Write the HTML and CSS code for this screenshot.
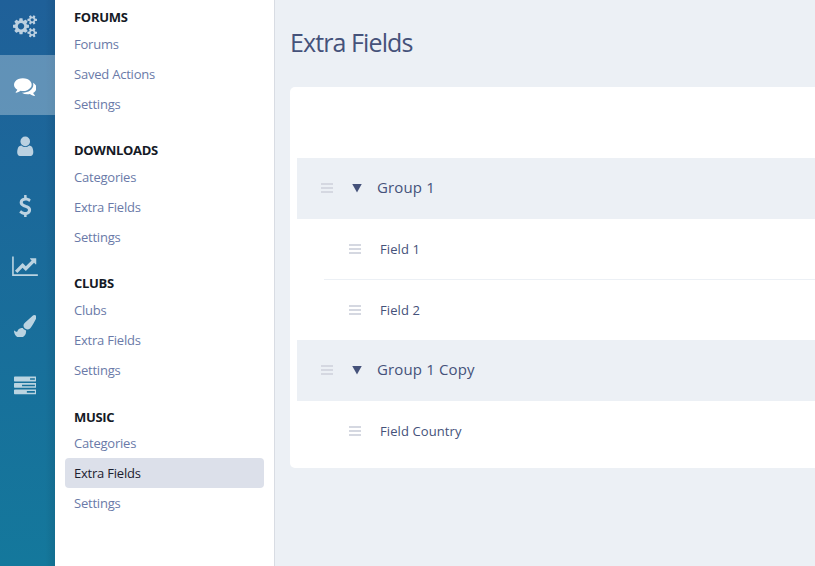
FILE: index.html
```
<!DOCTYPE html>
<html lang="en">
<head>
  <meta charset="UTF-8" />
  <meta name="viewport" content="width=device-width, initial-scale=1" />
  <title>Extra Fields</title>
  <link rel="stylesheet" href="styles.css">
</head>
<body>
  <nav class="rail">
    <a class="rail-item first"><svg class="icon cogs" viewBox="0 0 1920 1792"><path d="M896 896q0-106-75-181t-181-75-181 75-75 181 75 181 181 75 181-75 75-181zm768 512q0-52-38-90t-90-38-90 38-38 90q0 53 37.500 90.500t90.500 37.500 90.500-37.500 37.500-90.500zm0-1024q0-52-38-90t-90-38-90 38-38 90q0 53 37.500 90.500t90.500 37.500 90.500-37.500 37.500-90.500zm-384 421v185q0 10-7 19.500t-16 10.500l-155 24q-11 35-32 76 34 48 90 115 7 11 7 20 0 12-7 19-23 30-82.500 89.500t-78.500 59.500q-11 0-21-7l-115-90q-37 19-77 31-11 108-23 155-7 24-30 24h-186q-11 0-20-7.500t-10-17.500l-23-153q-34-10-75-31l-118 89q-7 7-20 7-11 0-21-8-144-133-144-160 0-9 7-19 10-14 41-53t47-61q-23-44-35-82l-152-24q-10-1-17-9.500t-7-19.500v-185q0-10 7-19.500t16-10.500l155-24q11-35 32-76-34-48-90-115-7-11-7-20 0-12 7-20 22-30 82-89t79-59q11 0 21 7l115 90q34-18 77-32 11-108 23-154 7-24 30-24h186q11 0 20 7.500t10 17.500l23 153q34 10 75 31l118-89q8-7 20-7 11 0 21 8 144 133 144 160 0 8-7 19-12 16-42 54t-45 60q23 48 34 82l152 23q10 2 17 10.500t7 19.500zm640 533v140q0 16-149 31-12 27-30 52 51 113 51 138 0 4-4 7-122 71-124 71-8 0-46-47t-52-68q-20 2-30 2t-30-2q-14 21-52 68t-46 47q-2 0-124-71-4-3-4-7 0-25 51-138-18-25-30-52-149-15-149-31v-140q0-16 149-31 13-29 30-52-51-113-51-138 0-4 4-7 4-2 35-20t59-34 30-16q8 0 46 46.500t52 67.500q20-2 30-2t30 2q51-71 92-112l6-2q4 0 124 70 4 3 4 7 0 25-51 138 17 23 30 52 149 15 149 31zm0-1024v140q0 16-149 31-12 27-30 52 51 113 51 138 0 4-4 7-122 71-124 71-8 0-46-47t-52-68q-20 2-30 2t-30-2q-14 21-52 68t-46 47q-2 0-124-71-4-3-4-7 0-25 51-138-18-25-30-52-149-15-149-31v-140q0-16 149-31 13-29 30-52-51-113-51-138 0-4 4-7 4-2 35-20t59-34 30-16q8 0 46 46.500t52 67.500q20-2 30-2t30 2q51-71 92-112l6-2q4 0 124 70 4 3 4 7 0 25-51 138 17 23 30 52 149 15 149 31z"/></svg></a>
    <a class="rail-item active"><svg class="icon" viewBox="0 0 1792 1792"><path d="M1408 768q0 139-94 257t-256.500 186.500-353.500 68.500q-86 0-176-16-124 88-278 128-36 9-86 16h-3q-11 0-20.500-8t-11.500-21q-1-3-1-6.500t.5-6.500 2-6l2.500-5 3.500-5.500 4-5 4.500-5 4-4.500q5-6 23-25t26-29.500 22.500-29 25-38.500 20.500-44q-124-72-195-177t-71-224q0-139 94-257t256.500-186.500 353.500-68.500 353.500 68.500 256.500 186.500 94 257zm384 256q0 120-71 224.500t-195 176.500q10 24 20.500 44t25 38.500 22.500 29 26 29.500 23 25q1 1 4 4.500t4.500 5 4 5 3.500 5.500l2.500 5 2 6 .5 6.500-1 6.500q-3 14-13 22t-22 7q-50-7-86-16-154-40-278-128-90 16-176 16-271 0-472-132 58 4 88 4 161 0 309-45t264-129q125-92 192-212t67-254q0-77-23-152 129 71 204 178t75 230z"/></svg></a>
    <a class="rail-item"><svg class="icon" viewBox="0 0 1792 1792"><path d="M1536 1399q0 109-62.500 187t-150.500 78h-854q-88 0-150.500-78t-62.500-187q0-85 8.500-160.500t31.500-152 58.500-131 94-89 134.500-34.500q131 128 313 128t313-128q76 0 134.500 34.500t94 89 58.500 131 31.500 152 8.500 160.500zm-256-887q0 159-112.500 271.500t-271.500 112.500-271.500-112.500-112.500-271.500 112.500-271.500 271.500-112.500 271.500 112.500 112.500 271.500z"/></svg></a>
    <a class="rail-item"><svg class="icon" viewBox="0 0 1792 1792"><path d="M1362 1185q0 153-99.500 263.500t-258.500 136.500v175q0 14-9 23t-23 9h-135q-13 0-22.500-9.500t-9.500-22.500v-175q-66-9-127.500-31t-101.500-44.500-74-48-46.500-37.500-17.500-18q-17-21-2-41l103-135q7-10 23-12 15-2 24 9l2 2q113 99 243 125 37 8 74 8 81 0 142.500-43t61.500-122q0-28-15-53t-33.500-42-58.500-37.500-66-32-80-32.500q-39-16-61.500-25t-61.500-26.500-62.500-31-56.500-35.500-53.500-42.500-43.500-49-35.500-58-21-66.500-8.500-78q0-138 98-242t255-134v-180q0-13 9.500-22.500t22.500-9.500h135q14 0 23 9t9 23v176q57 6 110.500 23t87 33.500 63.500 37.500 39 29 15 14q17 18 5 38l-81 146q-8 15-23 16-14 3-27-7-3-3-14.500-12t-39-26.500-58.500-32-74.500-26-85.500-11.500q-95 0-155 43t-60 111q0 26 8.500 48t29.500 41.500 39.500 33 56 31 60.500 27 70 27.500q53 20 81 31.500t76 35 75.500 42.500 62 50 53 63.500 31.500 76.500 13 94z"/></svg></a>
    <a class="rail-item"><svg class="icon chart" viewBox="0 0 2048 1792"><path d="M2048 1536v128h-2048v-1536h128v1408h1920zm-128-1248v435q0 21-19.500 29.500t-35.500-7.500l-121-121-633 633q-10 10-23 10t-23-10l-233-233-416 416-192-192 585-585q10-10 23-10t23 10l233 233 464-464-121-121q-16-16-7.500-35.500t29.500-19.500h435q14 0 23 9t9 23z"/></svg></a>
    <a class="rail-item"><svg class="icon" viewBox="0 0 1792 1792"><path d="M1615 0q70 0 122.500 46.500t52.500 116.500q0 63-45 151-332 629-465 752-97 91-218 91-126 0-216.500-92.500t-90.500-219.500q0-128 92-212l638-579q59-54 130-54zm-909 1034q39 76 106.500 130t150.500 76l1 71q4 213-129.500 347t-348.500 134q-123 0-218-46.500t-152.500-127.500-86.500-183-29-220q7 5 41 30t62 44.500 59 36.500 46 17q41 0 55-37 25-66 57.500-112.500t69.500-76 88-47.500 103-25.500 125-10.500z"/></svg></a>
    <a class="rail-item"><svg class="icon" viewBox="0 0 1792 1792"><path d="M1024 1408h640v-128h-640v128zm-384-512h1024v-128h-1024v128zm640-512h384v-128h-384v128zm512 832v256q0 26-19 45t-45 19h-1664q-26 0-45-19t-19-45v-256q0-26 19-45t45-19h1664q26 0 45 19t19 45zm0-512v256q0 26-19 45t-45 19h-1664q-26 0-45-19t-19-45v-256q0-26 19-45t45-19h1664q26 0 45 19t19 45zm0-512v256q0 26-19 45t-45 19h-1664q-26 0-45-19t-19-45v-256q0-26 19-45t45-19h1664q26 0 45 19t19 45z"/></svg></a>
  </nav>

  <aside class="submenu">
    <section class="menu-group">
      <h3>Forums</h3>
      <a>Forums</a>
      <a>Saved Actions</a>
      <a>Settings</a>
    </section>
    <section class="menu-group">
      <h3>Downloads</h3>
      <a>Categories</a>
      <a>Extra Fields</a>
      <a>Settings</a>
    </section>
    <section class="menu-group">
      <h3>Clubs</h3>
      <a>Clubs</a>
      <a>Extra Fields</a>
      <a>Settings</a>
    </section>
    <section class="menu-group">
      <h3>Music</h3>
      <a>Categories</a>
      <a class="selected">Extra Fields</a>
      <a>Settings</a>
    </section>
  </aside>

  <main class="content">
    <h1>Extra Fields</h1>
    <div class="panel">
      <div class="row group"><span class="handle"></span><span class="arrow"></span><span class="name">Group 1</span></div>
      <div class="fields">
        <div class="row field"><span class="handle"></span><span class="name">Field 1</span></div>
        <div class="row field"><span class="handle"></span><span class="name">Field 2</span></div>
      </div>
      <div class="row group"><span class="handle"></span><span class="arrow"></span><span class="name">Group 1 Copy</span></div>
      <div class="fields">
        <div class="row field last"><span class="handle"></span><span class="name">Field Country</span></div>
      </div>
    </div>
  </main>
</body>
</html>
```

FILE: styles.css
```
* {
  box-sizing: border-box;
}

body {
  margin: 0;
  height: 566px;
  display: flex;
  overflow: hidden;
  background: #ecf0f5;
  font-family: "Segoe UI", "Open Sans", sans-serif;
  font-size: 13px;
  color: #45527a;
}

/* icon bar */
.rail {
  width: 55px;
  flex: none;
  background: linear-gradient(to right, transparent 45px, rgba(0, 0, 0, 0.08)), linear-gradient(#1f6099, #14789c);
}

.rail-item {
  display: flex;
  align-items: center;
  justify-content: center;
  height: 60px;
  padding: 2px 5px 0 0;
}

.rail-item.first {
  height: 55px;
  padding: 0 5px 2px 0;
}

.rail-item.active {
  background: rgba(255, 255, 255, 0.3);
}

.icon {
  width: 22.5px;
  height: 22.5px;
  fill: #fff;
  opacity: 0.7;
}

.icon.cogs {
  width: 24px;
}

.icon.chart {
  width: 26px;
}

.active .icon {
  opacity: 1;
}

/* submenu */
.submenu {
  width: 220px;
  flex: none;
  padding: 5px 10px 0;
  background: #fff;
  border-right: 1px solid #d8dce3;
}

.menu-group {
  height: 133px;
}

.menu-group h3 {
  margin: 0;
  padding-left: 9px;
  height: 24px;
  line-height: 24px;
  font-size: 13px;
  font-weight: 700;
  letter-spacing: -0.3px;
  text-transform: uppercase;
  color: #151a26;
}

.menu-group:last-child h3 {
  line-height: 26px;
}

.menu-group a {
  display: block;
  height: 30px;
  line-height: 30px;
  padding-left: 9px;
  border-radius: 4px;
  font-size: 13px;
  letter-spacing: -0.22px;
  color: #6a7aa8;
}

.menu-group a.selected {
  background: #dce0ea;
  color: #1c2130;
}

/* content */
.content {
  flex: 1;
  padding-left: 15px;
}

h1 {
  margin: 0;
  height: 87px;
  line-height: 84px;
  font-size: 25px;
  font-weight: 400;
  letter-spacing: -0.9px;
}

.panel {
  height: 381px;
  padding: 71px 0 0 7px;
  background: #fff;
  border-radius: 5px 0 0 5px;
}

.row {
  display: flex;
  align-items: center;
}

.group {
  height: 61px;
  padding: 0 0 1px 24px;
  background: #ecf0f5;
  font-size: 15px;
  letter-spacing: 0.15px;
}

.group .name {
  padding-bottom: 2px;
}

.fields {
  padding-left: 27px;
}

.field {
  height: 61px;
  padding-left: 25px;
  font-size: 13px;
  letter-spacing: 0.1px;
}

.field + .field,
.field.last {
  height: 60px;
}

.field:not(:last-child) {
  border-bottom: 1px solid #ecf0f5;
}

.handle {
  width: 12px;
  height: 10px;
  margin-right: 19px;
  background: repeating-linear-gradient(#d5d8e1 0 2px, transparent 2px 4px);
}

.arrow {
  width: 10px;
  height: 9px;
  margin-right: 15px;
  background: #45527a;
  clip-path: polygon(0 0, 100% 0, 50% 100%);
}
```
